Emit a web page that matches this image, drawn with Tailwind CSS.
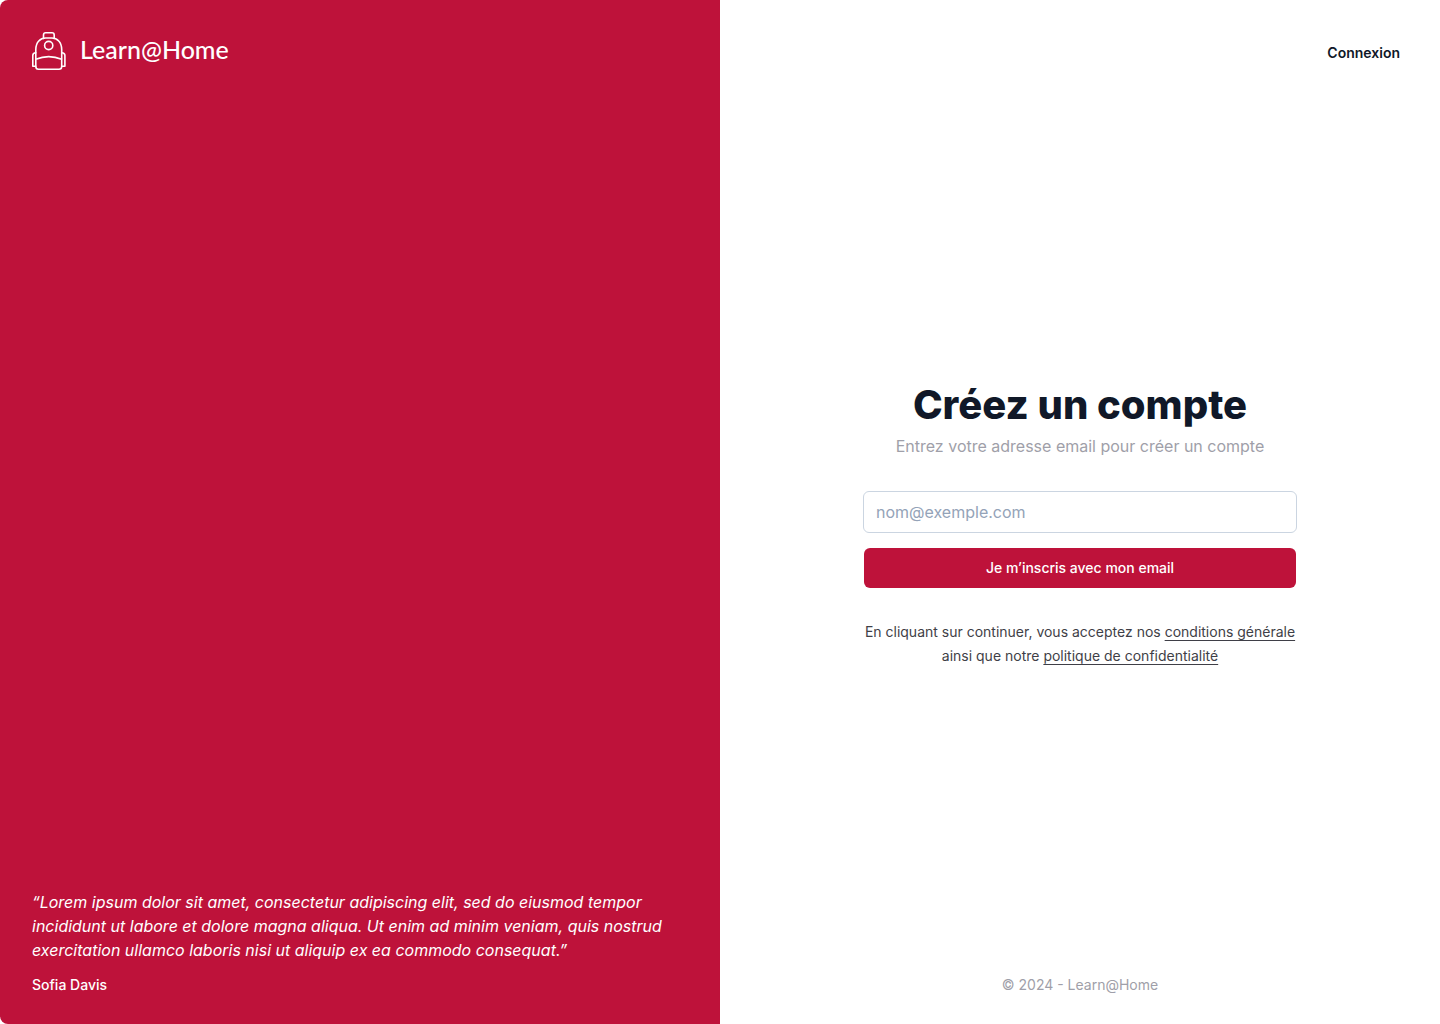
<!DOCTYPE html>
<html lang="fr">
<head>
<meta charset="utf-8">
<meta name="viewport" content="width=device-width, initial-scale=1">
<title>Learn@Home – Créez un compte</title>
<script src="https://cdn.jsdelivr.net/npm/@tailwindcss/browser@4"></script>
</head>
<body class="bg-white font-['Inter',sans-serif] text-gray-900">
<div class="grid min-h-screen grid-cols-2">
  <aside class="flex flex-col justify-between rounded-l-lg bg-[#be123a] px-8 pt-8 pb-[27px] text-white">
    <a href="#" class="flex items-center gap-3.5">
      <svg class="h-[38px] w-[34px]" viewBox="0 0 34 38" fill="none" stroke="currentColor" stroke-width="1.6" stroke-linejoin="round" stroke-linecap="round" aria-hidden="true">
        <path d="M11.5 6.5V3Q11.5 .8 13.7 .8H20Q22.2 .8 22.2 3V6.5"/>
        <path d="M3.8 26.8V17.5C3.8 10 8.5 6 13.5 6H20C25 6 29.7 10 29.7 17.5V26.8"/>
        <circle cx="16.7" cy="13.5" r="4.1"/>
        <path d="M3.8 27.2Q16.7 22 29.7 27.2V34.5Q29.7 37.2 27 37.2H6.5Q3.8 37.2 3.8 34.5Z"/>
        <path d="M3.8 20.8Q.8 21 .8 23.5V34.3H3.8M29.7 20.8Q32.9 21 32.9 23.5V34.3H29.7"/>
      </svg>
      <span class="pb-1 font-['Lato',sans-serif] text-[25px] leading-8 font-medium">Learn@Home</span>
    </a>
    <figure class="flex flex-col gap-[11px]">
      <blockquote class="text-base leading-6 italic">“Lorem ipsum dolor sit amet, consectetur adipiscing elit, sed do eiusmod tempor incididunt ut labore et dolore magna aliqua. Ut enim ad minim veniam, quis nostrud exercitation ullamco laboris nisi ut aliquip ex ea commodo consequat.”</blockquote>
      <figcaption class="text-sm leading-6 font-medium">Sofia Davis</figcaption>
    </figure>
  </aside>
  <div class="flex flex-col justify-between px-6 pt-[33px] pb-[27px]">
    <nav class="flex justify-end">
      <a href="#" class="px-4 py-2 text-sm leading-6 font-semibold">Connexion</a>
    </nav>
    <main class="mx-auto flex w-full max-w-[434px] flex-col items-center pt-[3px]">
      <h1 class="text-[40px] leading-12 font-extrabold">Créez un compte</h1>
      <p class="mt-[3px] text-base leading-7 text-zinc-400">Entrez votre adresse email pour créer un compte</p>
      <form class="mt-[31px] flex w-full flex-col gap-[15px]">
        <input type="email" aria-label="Adresse email" placeholder="nom@exemple.com" class="h-[42px] w-full rounded-md border border-[#cbd5e1] bg-white px-3 text-base placeholder:text-[#94a3b8]">
        <button type="button" class="mx-px h-10 rounded-md bg-[#be123a] text-sm font-medium text-white">Je m’inscris avec mon email</button>
      </form>
      <p class="mt-8 text-center text-sm leading-6 text-zinc-700">En cliquant sur continuer, vous acceptez nos <a href="#" class="underline underline-offset-3">conditions générale</a> ainsi que notre <a href="#" class="underline underline-offset-3">politique de confidentialité</a></p>
    </main>
    <footer class="text-center text-sm leading-6 text-zinc-400">© 2024 - Learn@Home</footer>
  </div>
</div>
</body>
</html>
